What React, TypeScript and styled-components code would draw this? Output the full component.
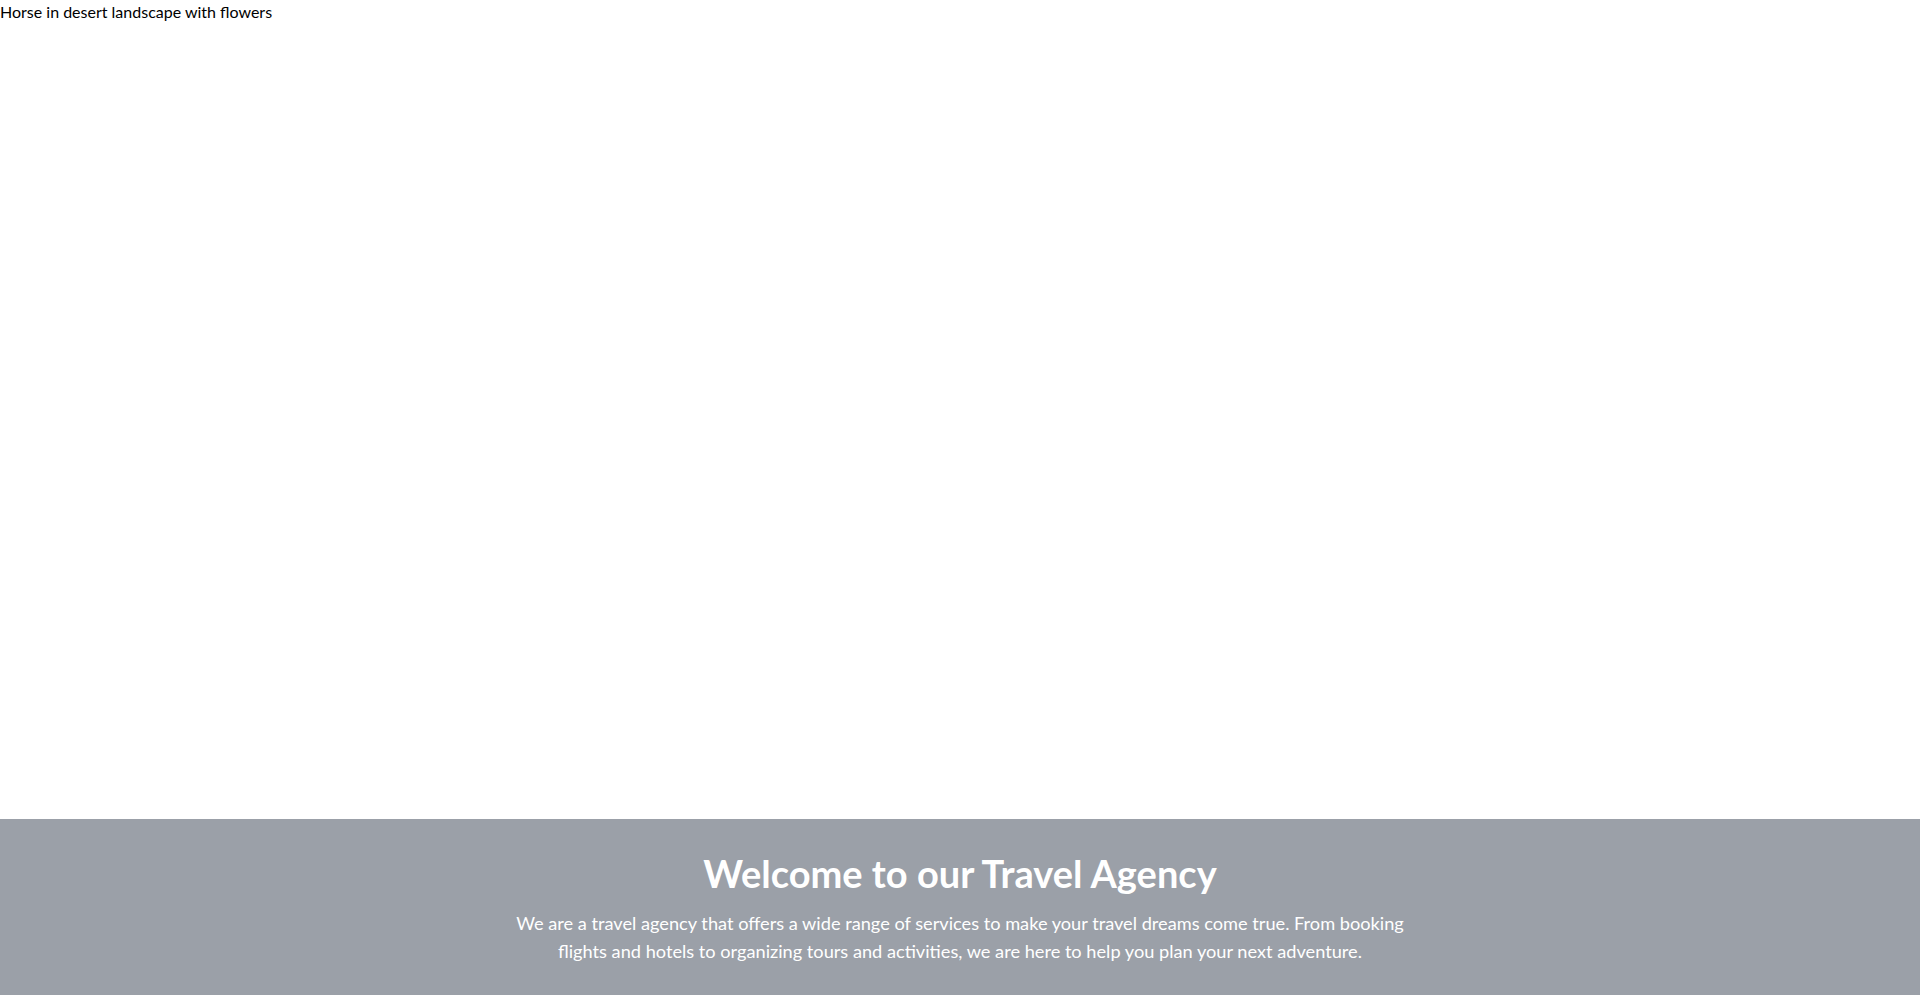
import React from "react";
import styled, { createGlobalStyle } from "styled-components";

const GlobalStyle = createGlobalStyle`
  html, body {
    margin: 0;
    padding: 0;
    background: #ffffff;
    font-family: "Segoe UI", Lato, "Open Sans", "Noto Sans", sans-serif;
  }
`;

const Page = styled.main`
  display: flex;
  flex-direction: column;
  min-height: 995px;
`;

const HeroPicture = styled.div`
  height: 819px;
  width: 100%;
  font-size: 16px;
  line-height: 24px;
  color: #000000;
`;

const Intro = styled.section`
  background: #9ba0a8;
  padding: 34px 16px 30px;
  display: flex;
  flex-direction: column;
  align-items: center;
  text-align: center;
  color: #ffffff;
`;

const Title = styled.h1`
  margin: 0 0 16px;
  font-size: 38px;
  line-height: 40px;
  font-weight: 700;
`;

const Lead = styled.p`
  margin: 0;
  max-width: 900px;
  font-size: 18.2px;
  line-height: 28px;
  font-weight: 400;
`;

export default function App() {
  return (
    <>
      <GlobalStyle />
      <Page>
        <HeroPicture role="img" aria-label="Horse in desert landscape with flowers">
          Horse in desert landscape with flowers
        </HeroPicture>
        <Intro>
          <Title>Welcome to our Travel Agency</Title>
          <Lead>
            We are a travel agency that offers a wide range of services to make your travel
            dreams come true. From booking flights and hotels to organizing tours and
            activities, we are here to help you plan your next adventure.
          </Lead>
        </Intro>
      </Page>
    </>
  );
}
